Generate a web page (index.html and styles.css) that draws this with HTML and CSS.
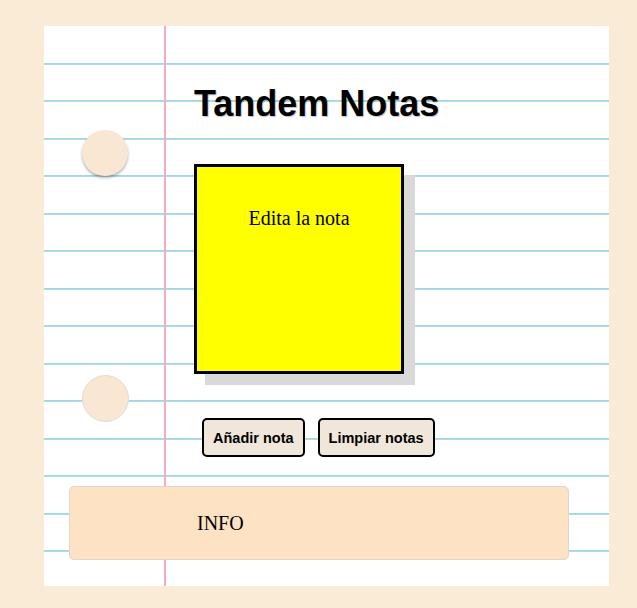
FILE: index.html
```html
<!DOCTYPE html>
<html lang="es">
<head>
<meta charset="utf-8">
<title>Tandem Notas</title>
<link rel="stylesheet" href="styles.css">
</head>
<body>
<div class="page">
  <div class="paper">
    <span class="hole hole-top"></span>
    <span class="hole hole-bottom"></span>
    <div class="content">
      <h1 class="title">Tandem Notas</h1>
      <div class="board">
        <div class="note">Edita la nota</div>
      </div>
      <div class="actions">
        <button class="btn" type="button">Añadir nota</button>
        <button class="btn" type="button">Limpiar notas</button>
      </div>
    </div>
    <div class="info">INFO</div>
  </div>
</div>
</body>
</html>
```
FILE: styles.css
```css
html, body {
  margin: 0;
  padding: 0;
  background: #faebd7;
}

.page {
  padding: 26px 28px 22px 44px;
}

.paper {
  position: relative;
  height: 560px;
  box-sizing: border-box;
  background-color: #fff;
  background-image:
    linear-gradient(to right, transparent 120px, #f2adbd 120px, #f2adbd 122px, transparent 122px),
    linear-gradient(to bottom, #fff 0, #fff 2px, transparent 2px),
    linear-gradient(to bottom,
      #9fd3da 0, #b6e0e6 2px, transparent 2px,
      transparent 38px, #9fd3da 38px, #b6e0e6 40px, transparent 40px);
  background-size: 100% 100%, 100% 100%, 100% 75px;
  background-position: 0 0, 0 0, 0 -1px;
  background-repeat: no-repeat, no-repeat, repeat-y;
  padding-top: 57px;
}

.hole {
  position: absolute;
  left: 38px;
  width: 46px;
  height: 46px;
  border-radius: 50%;
  background: #f9e6d3;
}

.hole-top {
  top: 104px;
  box-shadow: 0 2px 3px rgba(0, 0, 0, 0.3);
}

.hole-bottom {
  top: 349px;
  border: 1px solid #e2dcd6;
  width: 45px;
  height: 45px;
}

.content {
  padding-left: 150px;
}

.title {
  margin: 0;
  font-family: "Liberation Sans", Arial, sans-serif;
  font-weight: bold;
  font-size: 36px;
  line-height: 41px;
  color: #000;
  text-shadow: 1px 1px 1px rgba(0, 0, 0, 0.25);
}

.board {
  margin-top: 40px;
  display: flex;
}

.note {
  width: 204px;
  border: 3px solid #000;
  background: #ffff00;
  box-shadow: 11px 11px 0 #d9d9d9;
  box-sizing: content-box;
  font-family: "Liberation Serif", "Times New Roman", serif;
  font-size: 20px;
  line-height: 23px;
  text-align: center;
  padding-top: 40px;
  height: 164px;
}

.actions {
  display: flex;
  gap: 13px;
  margin-top: 44px;
  padding-left: 8px;
}

.btn {
  height: 39px;
  box-sizing: border-box;
  padding: 0 9px;
  border: 2px solid #000;
  border-radius: 5px;
  background: #f1e6da;
  font-family: "Liberation Sans", Arial, sans-serif;
  font-weight: bold;
  font-size: 14.5px;
  color: #000;
}

.info {
  margin: 29px 0 0 25px;
  width: 500px;
  height: 74px;
  box-sizing: border-box;
  border: 1px solid #e0d6cc;
  border-radius: 5px;
  background: #fde3c4;
  padding: 25px 0 0 127px;
  font-family: "Liberation Serif", "Times New Roman", serif;
  font-size: 20px;
  line-height: 23px;
  color: #000;
}
```
